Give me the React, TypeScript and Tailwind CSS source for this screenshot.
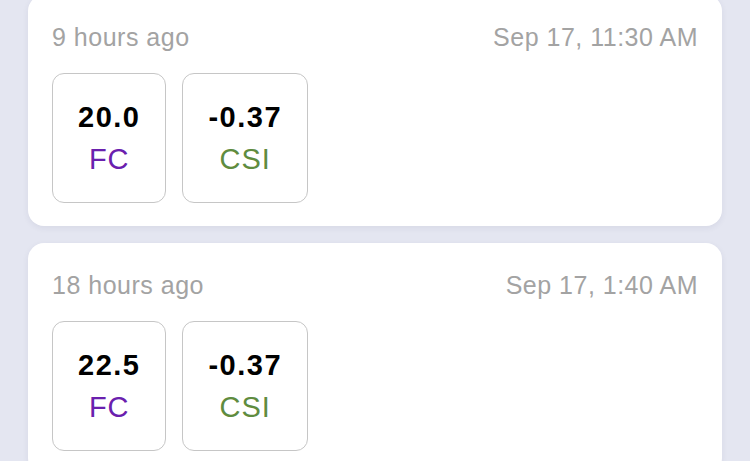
const readings = [
  { ago: "9 hours ago", time: "Sep 17, 11:30 AM", fc: "20.0", csi: "-0.37" },
  { ago: "18 hours ago", time: "Sep 17, 1:40 AM", fc: "22.5", csi: "-0.37" },
];

function Stat({ value, label, color }: { value: string; label: string; color: string }) {
  return (
    <div className="h-[130px] px-[25px] flex flex-col items-center justify-center border border-[#c6c6c6] rounded-[12px]">
      <div className="text-[29px] leading-[42px] font-bold tracking-[1.5px] text-black">{value}</div>
      <div className={`text-[29px] leading-[42px] tracking-[1px] ${color}`}>{label}</div>
    </div>
  );
}

export default function App() {
  return (
    <div
      className="min-h-screen bg-[#e4e6f1] overflow-hidden"
      style={{ fontFamily: '"Liberation Sans", Arial, sans-serif' }}
    >
      <div className="flex flex-col gap-[17px] px-[28px] -mt-[5px]">
        {readings.map((r) => (
          <div
            key={r.ago}
            className="bg-white rounded-[16px] px-6 pt-[27px] pb-[23px] shadow-[0_2px_6px_rgba(40,45,90,0.07)]"
          >
            <div className="flex justify-between text-[25px] leading-[30px] tracking-[0.5px] text-[#a3a3a3]">
              <span>{r.ago}</span>
              <span>{r.time}</span>
            </div>
            <div className="mt-[21px] flex gap-4">
              <Stat value={r.fc} label="FC" color="text-[#6a20ae]" />
              <Stat value={r.csi} label="CSI" color="text-[#5f8c3f]" />
            </div>
          </div>
        ))}
      </div>
    </div>
  );
}
